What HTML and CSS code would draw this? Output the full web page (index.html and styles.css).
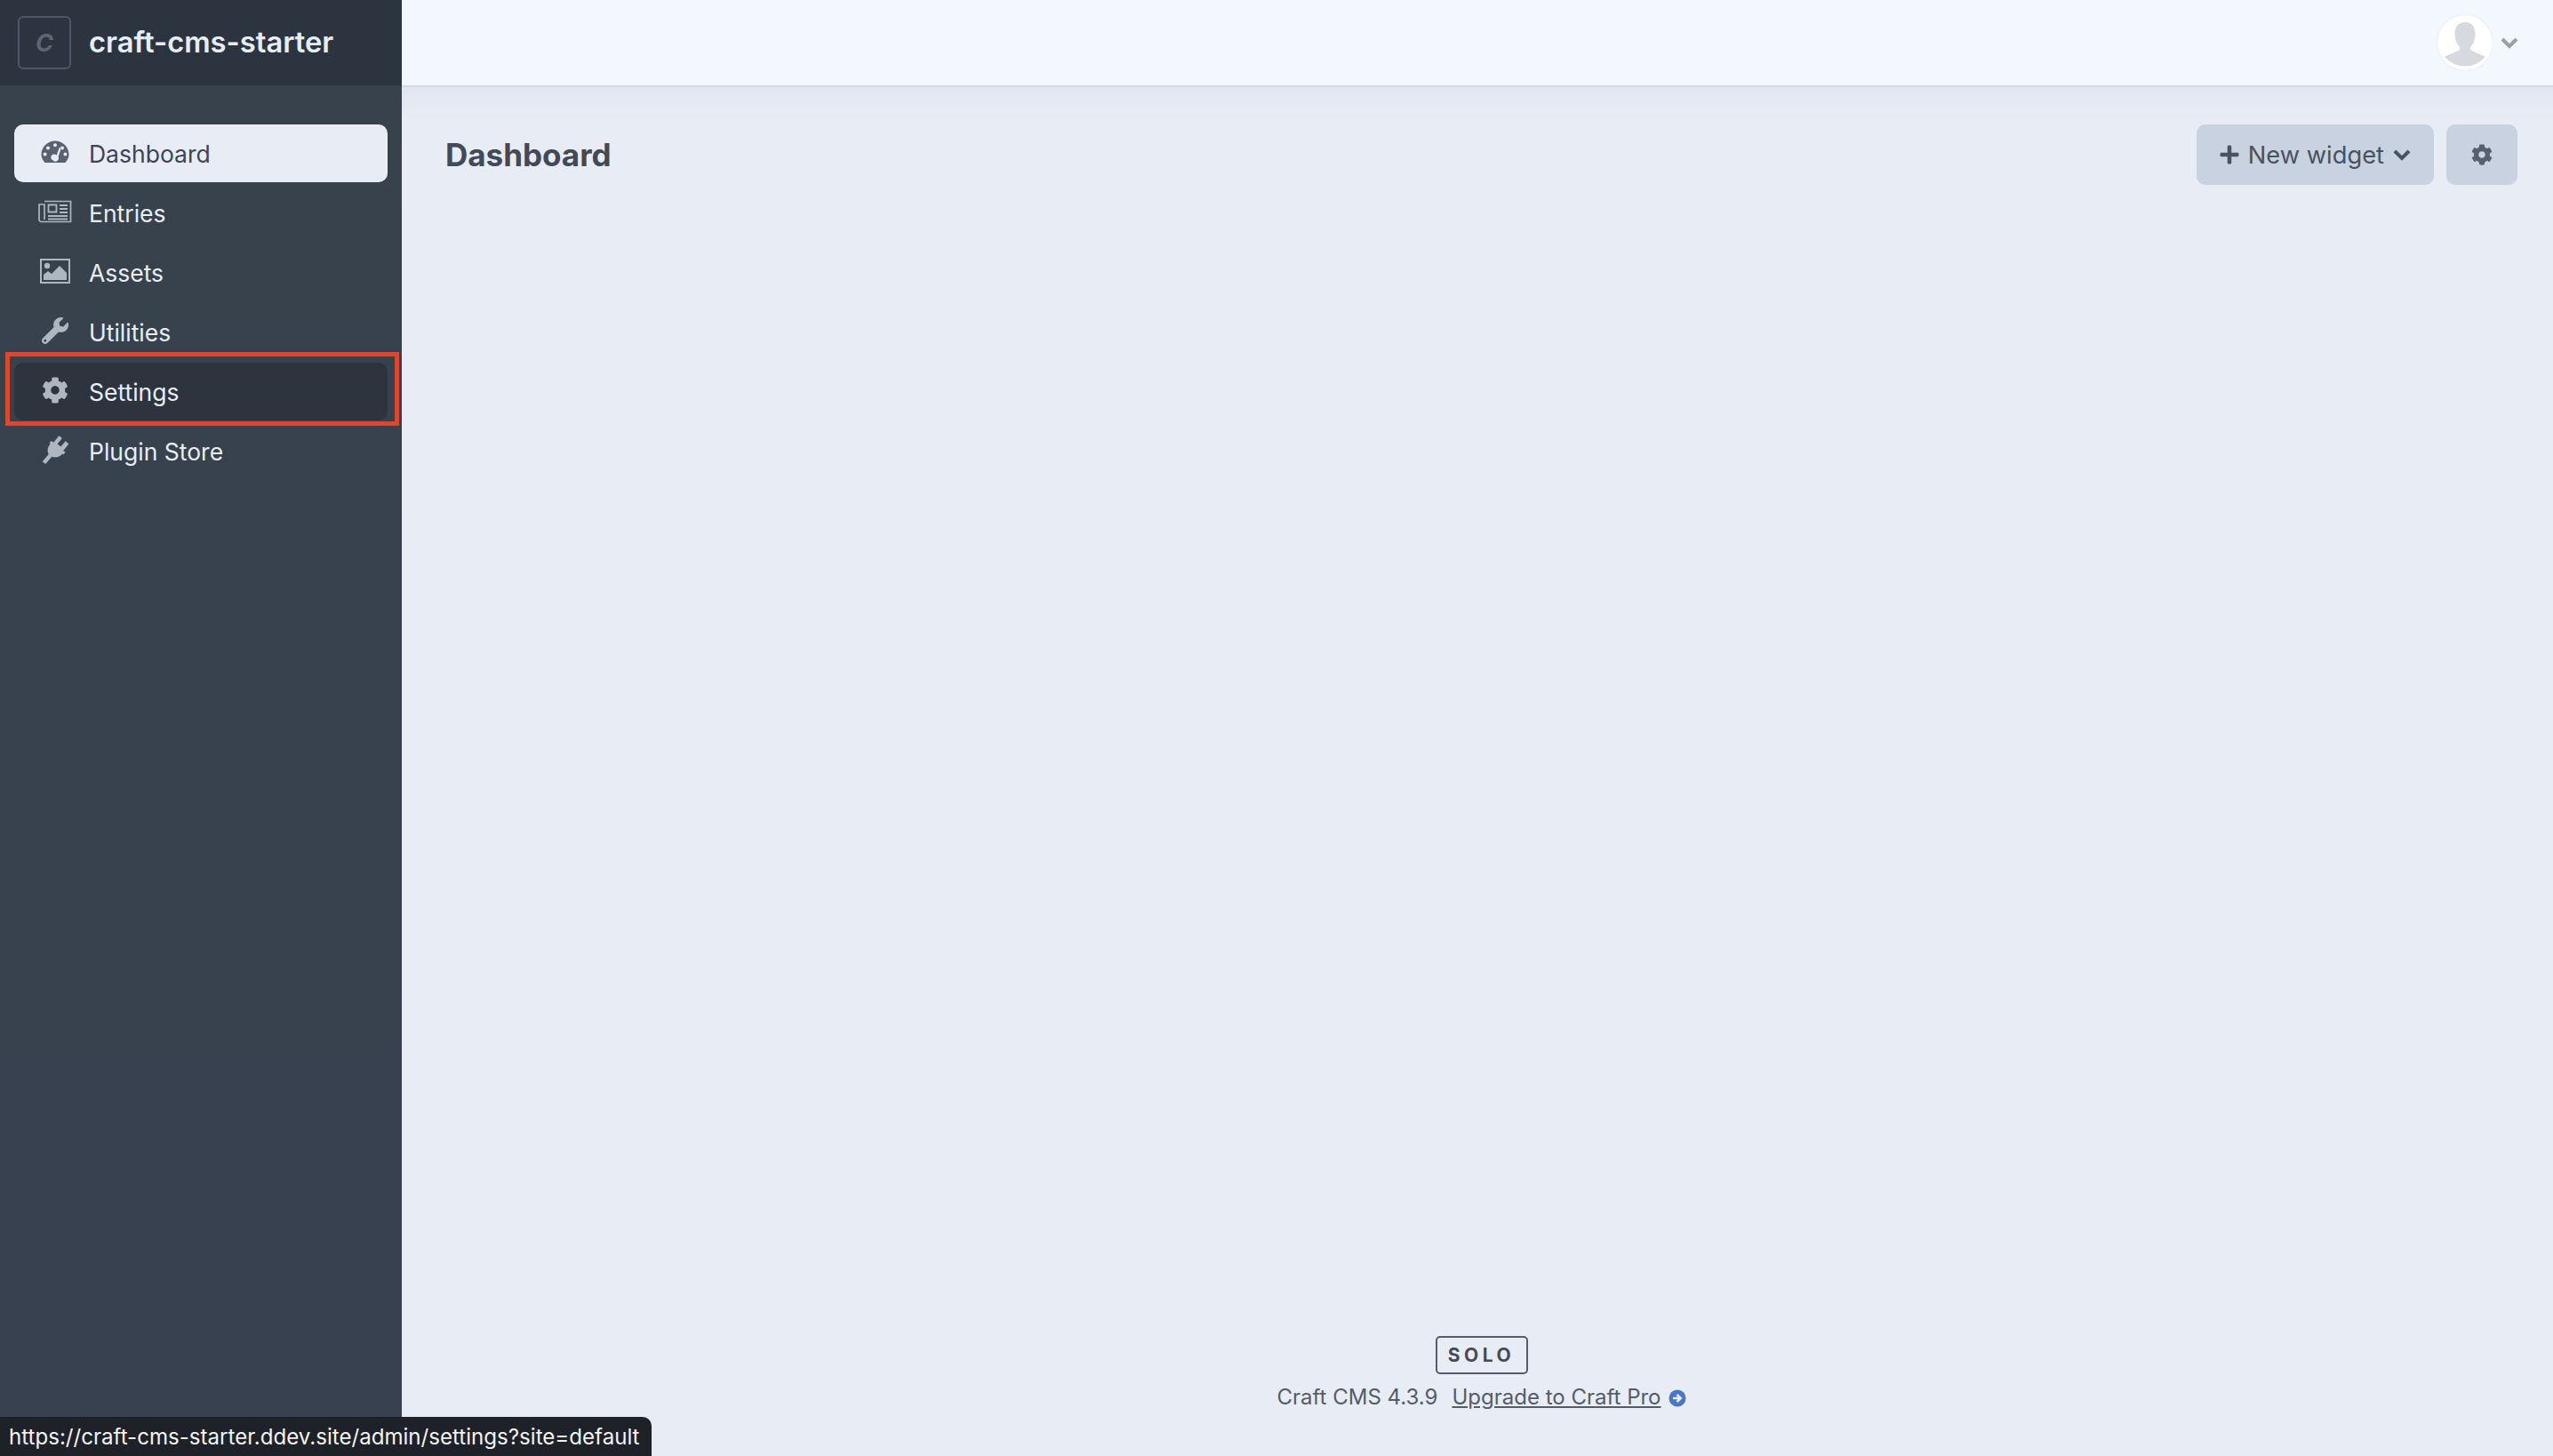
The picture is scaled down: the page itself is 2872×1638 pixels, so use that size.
FILE: index.html
```html
<!DOCTYPE html>
<html lang="en">
<head>
    <meta charset="UTF-8">
    <meta name="viewport" content="width=device-width, initial-scale=1.0">
    <title>Dashboard - craft-cms-starter</title>
    <link rel="stylesheet" href="styles.css">
</head>
<body>

    <svg class="icon-defs" width="0" height="0">
        <symbol id="i-cog" viewBox="0 0 512 512"><path d="M487.4 315.7l-42.6-24.6c4.3-23.2 4.3-47 0-70.2l42.6-24.6c4.9-2.8 7.1-8.6 5.5-14-11.1-35.6-30-67.8-54.7-94.6-3.8-4.1-10-5.1-14.8-2.3L380.8 110c-17.9-15.4-38.5-27.3-60.8-35.1V25.8c0-5.6-3.9-10.5-9.4-11.7-36.7-8.2-74.3-7.8-109.2 0-5.5 1.2-9.4 6.1-9.4 11.7V75c-22.2 7.9-42.8 19.8-60.8 35.1L88.7 85.5c-4.9-2.8-11-1.9-14.8 2.3-24.7 26.7-43.6 58.9-54.7 94.6-1.7 5.4.6 11.2 5.5 14L67.3 221c-4.3 23.2-4.3 47 0 70.2l-42.6 24.6c-4.9 2.8-7.1 8.6-5.5 14 11.1 35.6 30 67.8 54.7 94.6 3.8 4.1 10 5.1 14.8 2.3l42.6-24.6c17.9 15.4 38.5 27.3 60.8 35.1v49.2c0 5.6 3.9 10.5 9.4 11.7 36.7 8.2 74.3 7.8 109.2 0 5.5-1.2 9.4-6.1 9.4-11.7v-49.2c22.2-7.9 42.8-19.8 60.8-35.1l42.6 24.6c4.9 2.8 11 1.9 14.8-2.3 24.7-26.7 43.6-58.9 54.7-94.6 1.5-5.5-.7-11.3-5.6-14.1zM256 336c-44.1 0-80-35.9-80-80s35.9-80 80-80 80 35.9 80 80-35.9 80-80 80z"/></symbol>
        <symbol id="i-chevron" viewBox="0 0 20 14"><path d="M2 3l8 8 8-8" fill="none" stroke="currentColor" stroke-width="4"/></symbol>
    </svg>

    <div class="layout">
        <!-- sidebar -->
        <aside class="sidebar">
            <div class="site-header">
                <div class="site-logo">C</div>
                <div class="site-name">craft-cms-starter</div>
            </div>
            <nav class="nav">
                <a class="nav-item active">
                    <span class="nav-icon">
                        <svg width="32" height="26" viewBox="0 0 32 26"><path fill-rule="evenodd" d="M4.6 25C2.3 22.400 .5 19.500 .5 16 .5 7.400 7.400 .5 16 .5S31.500 7.400 31.500 16c0 3.500-1.800 6.400-4.100 9H4.600zM16 3.200a2 2 0 1 0 0 4 2 2 0 0 0 0-4zM8 6.500a2 2 0 1 0 0 4 2 2 0 0 0 0-4zM24 6.500a2 2 0 1 0 0 4 2 2 0 0 0 0-4zM4.600 13.500a2 2 0 1 0 0 4 2 2 0 0 0 0-4zM27.400 13.500a2 2 0 1 0 0 4 2 2 0 0 0 0-4zM21 7.500l-3.400 9.300a3.600 3.600 0 1 0-3.500 5.900 3.600 3.600 0 0 0 5.500-4.400L23 8.200z"/></svg>
                    </span>
                    Dashboard
                </a>
                <a class="nav-item">
                    <span class="nav-icon">
                        <svg width="38" height="26" viewBox="0 0 38 26" fill="none" stroke="currentColor"><path stroke-width="1.700" d="M7 1.500h29.500v23H3.500a2.500 2.500 0 0 1-2.500-2.500V5h6v17"/><path stroke-width="1.800" d="M11.500 5.500h9v8h-9z"/><path stroke-width="1.800" d="M24 6h9M24 10h9M24 14h9M11 18h22M11 21.500h22"/></svg>
                    </span>
                    Entries
                </a>
                <a class="nav-item">
                    <span class="nav-icon">
                        <svg width="34" height="28" viewBox="0 0 34 28"><rect x="1" y="1" width="32" height="26" fill="none" stroke="currentColor" stroke-width="2"/><circle cx="8" cy="8" r="3.200" fill="currentColor"/><path fill="currentColor" d="M4 24v-6l5-4 4 3 9-9 8 8v8z"/></svg>
                    </span>
                    Assets
                </a>
                <a class="nav-item">
                    <span class="nav-icon">
                        <svg width="30" height="30" viewBox="0 0 512 512"><path fill="currentColor" d="M507.730 109.100c-2.240-9.030-13.540-12.090-20.120-5.510l-74.360 74.360-67.880-11.310-11.310-67.880 74.360-74.360c6.620-6.620 3.430-17.900-5.660-20.160-47.380-11.740-99.550.91-136.580 37.930-39.640 39.640-50.550 97.100-34.050 147.200L18.740 402.760c-24.990 24.990-24.990 65.510 0 90.500 24.990 24.990 65.510 24.990 90.500 0l213.210-213.210c50.120 16.710 107.470 5.680 147.370-34.220 37.070-37.070 49.700-89.320 37.910-136.730zM64 472c-13.250 0-24-10.750-24-24 0-13.260 10.750-24 24-24s24 10.740 24 24c0 13.250-10.750 24-24 24z"/></svg>
                    </span>
                    Utilities
                </a>
                <a class="nav-item selected">
                    <span class="nav-icon"><svg width="30" height="30"><use href="#i-cog"/></svg></span>
                    Settings
                    <span class="highlight-box"></span>
                </a>
                <a class="nav-item">
                    <span class="nav-icon">
                        <svg width="34" height="34" viewBox="0 0 32 32"><path fill="currentColor" d="M20.600 1.500l2.800 2.300-5 6 3.600 3 5-6 2.800 2.300a1.300 1.300 0 0 1-.1 1.800l-5 6 2.200 1.800-2 2.300-1-.8c-3.200 3.400-7.500 4.600-11.300 3L5.800 31 2.500 28.500l6.700-7.700C7.200 17.400 8 13 11 9.600l-1-.8 2-2.300 2.200 1.800 5-6a1 1 0 0 1 1.400-.8z"/></svg>
                    </span>
                    Plugin Store
                </a>
            </nav>
        </aside>

        <!-- main content -->
        <div class="content">
            <header class="topbar">
                <div class="account">
                    <span class="avatar">
                        <svg width="62" height="62" viewBox="0 0 62 62"><path fill="#d6d9de" d="M31 8c7 0 11.500 5 11.500 13 0 6-2 11.500-5.500 15-.8 2 .2 3.500 2 4.200L54 46.800A30 30 0 0 1 8 46.800l15-6.600c1.800-.7 2.800-2.200 2-4.200-3.500-3.500-5.500-9-5.500-15C19.500 13 24 8 31 8z"/></svg>
                    </span>
                    <svg class="chevron account-chevron" width="20" height="14"><use href="#i-chevron"/></svg>
                </div>
            </header>

            <main class="main">
                <div class="page-header">
                    <h1>Dashboard</h1>
                    <div class="actions">
                        <button class="btn">
                            <svg width="22" height="24" viewBox="0 0 448 512"><path fill="currentColor" d="M416 208H272V64c0-17.670-14.330-32-32-32h-32c-17.670 0-32 14.330-32 32v144H32c-17.670 0-32 14.330-32 32v32c0 17.670 14.330 32 32 32h144v144c0 17.670 14.330 32 32 32h32c17.670 0 32-14.330 32-32V304h144c17.670 0 32-14.330 32-32v-32c0-17.670-14.330-32-32-32z"/></svg>
                            New widget
                            <svg width="20" height="14"><use href="#i-chevron"/></svg>
                        </button>
                        <button class="btn btn-icon"><svg width="24" height="24"><use href="#i-cog"/></svg></button>
                    </div>
                </div>

                <footer class="footer">
                    <div class="edition">SOLO</div>
                    <div class="version">
                        <span>Craft CMS 4.3.9</span>
                        <a class="upgrade">Upgrade to Craft Pro</a>
                        <svg width="20" height="20" viewBox="0 0 20 20"><circle cx="10" cy="10" r="9.500" fill="#4a76c9"/><path d="M5 10h8M9.500 5.800l4.200 4.200-4.200 4.200" fill="none" stroke="#e8edf7" stroke-width="2.600"/></svg>
                    </div>
                </footer>
            </main>
        </div>
    </div>

    <div class="status-url">https://craft-cms-starter.ddev.site/admin/settings?site=default</div>

</body>
</html>
```

FILE: styles.css
```css
html, body {
    height: 100%;
}

body {
    margin: 0;
    font-family: Inter, "Liberation Sans", sans-serif;
    background-color: #e8ecf5;
    color: #434a57;
    overflow: hidden;
}

.icon-defs {
    position: absolute;
}

.layout {
    display: flex;
    height: 100%;
}

/* sidebar */

.sidebar {
    width: 452px;
    flex-shrink: 0;
    background: linear-gradient(to bottom, #37424c, #384150);
    color: #e8edf6;
}

.site-header {
    height: 96px;
    box-sizing: border-box;
    padding-left: 20px;
    display: flex;
    align-items: center;
    gap: 20px;
    background-color: #2c343f;
}

.site-logo {
    width: 60px;
    height: 60px;
    box-sizing: border-box;
    border: 2px solid #4e5864;
    border-radius: 6px;
    display: flex;
    align-items: center;
    justify-content: center;
    color: #5d6772;
    font-size: 27px;
    font-weight: 700;
    font-style: italic;
}

.site-name {
    font-size: 32.700px;
    font-weight: 600;
    color: #e6edf6;
    margin-top: -2px;
}

.nav {
    padding: 44px 16px 0;
    display: flex;
    flex-direction: column;
    gap: 2px;
}

.nav-item {
    position: relative;
    height: 65px;
    display: flex;
    align-items: center;
    border-radius: 10px;
    font-size: 26.500px;
    color: #e8edf6;
}

.nav-item.active {
    background-color: #e8ecf5;
    color: #3d4452;
}

.nav-item.selected {
    background-color: #2d343d;
}

.nav-icon {
    width: 84px;
    flex-shrink: 0;
    display: flex;
    justify-content: center;
    margin-top: -4px;
    position: relative;
    left: 4px;
    color: #aeb6c0;
    fill: #aeb6c0;
}

.nav-item.active .nav-icon {
    color: #5a6170;
    fill: #5a6170;
}

.highlight-box {
    position: absolute;
    top: -12px;
    bottom: -6px;
    left: -10px;
    right: -13px;
    border: 5px solid #e0452f;
}

/* top bar */

.content {
    flex: 1;
    display: flex;
    flex-direction: column;
    min-width: 0;
}

.topbar {
    height: 98px;
    flex-shrink: 0;
    box-sizing: border-box;
    background-color: #f3f7fe;
    border-bottom: 2px solid #d3d9e2;
    display: flex;
    align-items: center;
    justify-content: flex-end;
    padding-right: 39px;
}

.account {
    display: flex;
    align-items: center;
    gap: 9px;
}

.avatar {
    width: 62px;
    height: 62px;
    border-radius: 50%;
    background-color: #fff;
    overflow: hidden;
    display: block;
    box-shadow: 0 0 2px #d8dde5;
}

.avatar svg {
    display: block;
}

.account-chevron {
    color: #9a9fa8;
}

/* page */

.main {
    flex: 1;
    display: flex;
    flex-direction: column;
    padding: 42px 40px 0 49px;
    background: linear-gradient(to bottom, #e1e7f0, #e8ecf5 40px);
}

.page-header {
    display: flex;
    align-items: center;
    justify-content: space-between;
}

.page-header h1 {
    margin: 0;
    font-size: 35px;
    font-weight: 700;
    color: #434a57;
}

.actions {
    display: flex;
    gap: 14px;
}

.btn {
    height: 68px;
    padding: 0 26px;
    border: none;
    border-radius: 10px;
    background-color: #c8d2e0;
    color: #49525f;
    font-family: inherit;
    font-size: 27.300px;
    display: flex;
    align-items: center;
    gap: 10px;
}

.btn-icon {
    width: 80px;
    padding: 0;
    justify-content: center;
    fill: #566070;
}

/* footer */

.footer {
    margin-top: auto;
    margin-bottom: 52px;
    display: flex;
    flex-direction: column;
    align-items: center;
    gap: 11px;
    font-size: 24px;
    color: #555c69;
}

.edition {
    width: 104px;
    height: 43px;
    box-sizing: border-box;
    border: 2px solid #555c69;
    border-radius: 5px;
    display: flex;
    align-items: center;
    justify-content: center;
    font-size: 21px;
    font-weight: 700;
    letter-spacing: 4.500px;
    color: #444b58;
}

.version {
    display: flex;
    align-items: center;
    gap: 16px;
}

.upgrade {
    text-decoration: underline;
}

.version svg {
    margin-left: -8px;
    margin-top: 3px;
}

/* link preview at the bottom left */

.status-url {
    position: absolute;
    left: 0;
    bottom: 0;
    height: 44px;
    padding: 0 14px 0 10px;
    display: flex;
    align-items: center;
    background-color: #1e2127;
    border-top-right-radius: 10px;
    color: #f2f3f5;
    font-size: 24.100px;
}
```
